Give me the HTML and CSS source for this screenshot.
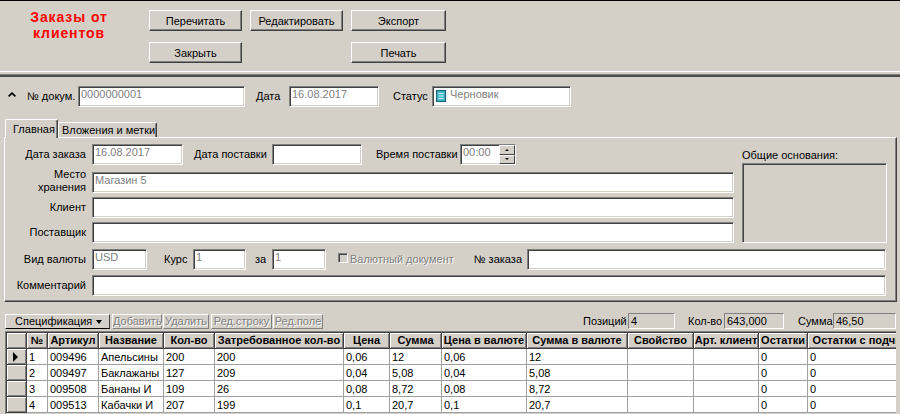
FILE: index.html
```html
<!DOCTYPE html>
<html lang="ru">
<head>
<meta charset="utf-8">
<title>Заказы от клиентов</title>
<link rel="stylesheet" href="styles.css">
</head>
<body>
<div class="top">
  <div class="title"><div>Заказы от</div><div>клиентов</div></div>
  <div class="actions">
    <button class="btn">Перечитать</button>
    <button class="btn">Редактировать</button>
    <button class="btn">Экспорт</button>
    <button class="btn">Закрыть</button>
    <span></span>
    <button class="btn">Печать</button>
  </div>
</div>
<div class="sep"></div>

<div class="docrow">
  <svg class="chev" width="8" height="5" viewBox="0 0 8 5"><path d="M0.6 4.4L4 1.1L7.4 4.4" fill="none" stroke="#000" stroke-width="1.6"/></svg>
  <span class="lbl w-docl">№ докум.</span>
  <div class="field w-doc">0000000001</div>
  <span class="lbl w-datel">Дата</span>
  <div class="field w-date">16.08.2017</div>
  <span class="lbl w-statl">Статус</span>
  <div class="field w-stat">
    <svg class="sticon" width="10" height="12" viewBox="0 0 10 12"><rect x="0.5" y="0.5" width="9" height="11" fill="#3bb4c6" stroke="#1c5f6c"/><path d="M2.5 3.5h5M2.5 6h5M2.5 8.5h5" stroke="#dff6fa" stroke-width="1"/></svg>
    <span class="sttext">Черновик</span>
  </div>
</div>

<div class="tabs">
  <div class="tab active">Главная</div>
  <div class="tab">Вложения и метки</div>
</div>
<div class="panel">
  <div class="upper">
    <div class="form">
      <div class="row">
        <span class="lbl lcol">Дата заказа</span>
        <div class="field w91">16.08.2017</div>
        <span class="lbl w-dpl">Дата поставки</span>
        <div class="field w90"></div>
        <span class="lbl w-tpl">Время поставки</span>
        <div class="field w56 spinfield">
          <span>00:00</span>
          <div class="spin"><div class="sb"><i class="tri-up"></i></div><div class="sb"><i class="tri-dn"></i></div></div>
        </div>
      </div>
      <div class="row r2">
        <span class="lbl lcol two">Место<br>хранения</span>
        <div class="field grow">Магазин 5</div>
      </div>
      <div class="row r3">
        <span class="lbl lcol">Клиент</span>
        <div class="field grow"></div>
      </div>
      <div class="row r3">
        <span class="lbl lcol">Поставщик</span>
        <div class="field grow"></div>
      </div>
    </div>
    <div class="basis">
      <div class="basis-lbl">Общие основания:</div>
      <div class="basis-box"></div>
    </div>
  </div>
  <div class="row cur">
    <span class="lbl lcol">Вид валюты</span>
    <div class="field w55">USD</div>
    <span class="lbl w-kurs">Курс</span>
    <div class="field w53">1</div>
    <span class="lbl w-za">за</span>
    <div class="field w54">1</div>
    <span class="chk"></span>
    <span class="lbl disabled w-val">Валютный документ</span>
    <span class="lbl w-ord">№ заказа</span>
    <div class="field w359"></div>
  </div>
  <div class="row com">
    <span class="lbl lcol">Комментарий</span>
    <div class="field grow"></div>
  </div>
</div>

<div class="toolbar">
  <div class="tbtn spec">Спецификация<span class="caret"></span></div>
  <div class="tbtn dis w-add">Добавить</div>
  <div class="tbtn dis w-del">Удалить</div>
  <div class="tbtn dis w-rs">Ред.строку</div>
  <div class="tbtn dis w-rp">Ред.поле</div>
  <span class="lbl sm w-pos">Позиций</span>
  <div class="sfield w47">4</div>
  <span class="lbl sm w-qty">Кол-во</span>
  <div class="sfield w60">643,000</div>
  <span class="lbl sm w-sum">Сумма</span>
  <div class="sfield w63">46,50</div>
</div>

<div class="grid">
  <div class="gt">
    <div class="h"></div><div class="h">№</div><div class="h">Артикул</div><div class="h">Название</div><div class="h">Кол-во</div><div class="h">Затребованное кол-во</div><div class="h">Цена</div><div class="h">Сумма</div><div class="h">Цена в валюте</div><div class="h">Сумма в валюте</div><div class="h">Свойство</div><div class="h">Арт. клиент</div><div class="h">Остатки</div><div class="h">Остатки с подчиненными</div>

    <div class="h ind"><i class="cur-tri"></i></div><div class="d">1</div><div class="d">009496</div><div class="d">Апельсины</div><div class="d">200</div><div class="d">200</div><div class="d">0,06</div><div class="d">12</div><div class="d">0,06</div><div class="d">12</div><div class="d"></div><div class="d"></div><div class="d">0</div><div class="d">0</div>

    <div class="h ind"></div><div class="d">2</div><div class="d">009497</div><div class="d">Баклажаны</div><div class="d">127</div><div class="d">209</div><div class="d">0,04</div><div class="d">5,08</div><div class="d">0,04</div><div class="d">5,08</div><div class="d"></div><div class="d"></div><div class="d">0</div><div class="d">0</div>

    <div class="h ind"></div><div class="d">3</div><div class="d">009508</div><div class="d">Бананы И</div><div class="d">109</div><div class="d">26</div><div class="d">0,08</div><div class="d">8,72</div><div class="d">0,08</div><div class="d">8,72</div><div class="d"></div><div class="d"></div><div class="d">0</div><div class="d">0</div>

    <div class="h ind"></div><div class="d">4</div><div class="d">009513</div><div class="d">Кабачки И</div><div class="d">207</div><div class="d">199</div><div class="d">0,1</div><div class="d">20,7</div><div class="d">0,1</div><div class="d">20,7</div><div class="d"></div><div class="d"></div><div class="d">0</div><div class="d">0</div>
  </div>
</div>
</body>
</html>
```

FILE: styles.css
```css
* { box-sizing: border-box; }
html, body { margin: 0; padding: 0; }
body {
  width: 900px;
  height: 414px;
  overflow: hidden;
  background: #d4d0c8;
  font-family: "Liberation Sans", Arial, sans-serif;
  font-size: 11px;
  color: #000;
}

/* ---------- top bar ---------- */
.top {
  height: 71px;
  border-top: 1px solid #000;
  display: flex;
}
.title {
  width: 138px;
  padding-top: 8px;
  text-align: center;
  font-weight: bold;
  font-size: 14px;
  line-height: 16px;
  letter-spacing: 0.9px;
  color: #ff0000;
}
.actions {
  display: grid;
  grid-template-columns: 93px 93px 95px;
  grid-auto-rows: 21px;
  column-gap: 8px;
  row-gap: 11px;
  margin: 9px 0 0 11px;
}
.btn {
  height: 21px;
  padding: 0;
  margin: 0;
  background: #d4d0c8;
  border: 1px solid;
  border-color: #fff #404040 #404040 #fff;
  box-shadow: inset -1px -1px 0 #808080;
  font-family: "Liberation Sans", Arial, sans-serif;
  font-size: 11px;
  color: #000;
}
.sep {
  height: 6px;
  background: linear-gradient(#fff 0 1px, #d4d0c8 1px 3px, #808080 3px 4px, #4a4a48 4px 6px);
}

/* ---------- common ---------- */
.lbl {
  flex: none;
  line-height: 21px;
  white-space: nowrap;
}
.field {
  flex: none;
  height: 21px;
  background: #fff;
  border: 1px solid;
  border-color: #808080 #fff #fff #808080;
  box-shadow: inset 1px 1px 0 #404040, inset -1px -1px 0 #d4d0c8;
  padding: 1px 0 0 2px;
  line-height: 13px;
  color: #808080;
  white-space: nowrap;
  overflow: hidden;
}
.grow { flex: 1; }

/* ---------- document row ---------- */
.docrow {
  display: flex;
  align-items: center;
  height: 21px;
  margin-top: 9px;
}
.chev { flex: none; margin-left: 8px; align-self: flex-start; margin-top: 6px; }
.w-docl { margin-left: 11px; width: 51px; }
.w-doc { width: 167px; }
.w-datel { margin-left: 11px; width: 33px; }
.w-date { width: 90px; }
.w-statl { margin-left: 14px; width: 39px; }
.w-stat { width: 139px; display: flex; align-items: flex-start; }
.sticon { flex: none; margin: 2px 0 0 1px; }
.sttext { margin-left: 4px; }

/* ---------- tabs ---------- */
.tabs {
  display: flex;
  align-items: flex-end;
  height: 18px;
  margin-top: 12px;
  padding-left: 5px;
}
.tab {
  background: #d4d0c8;
  border-top: 1px solid #fff;
  border-left: 1px solid #fff;
  border-right: 1px solid #404040;
  box-shadow: inset -1px 0 0 #808080;
  border-radius: 2px 2px 0 0;
  white-space: nowrap;
  line-height: 13px;
}
.tab.active {
  position: relative;
  z-index: 1;
  width: 53px;
  height: 19px;
  margin-bottom: -1px;
  padding: 3px 0 0 7px;
}
.tab:not(.active) {
  width: 99px;
  height: 15px;
  padding: 1px 0 0 3px;
}

/* ---------- panel ---------- */
.panel {
  margin-left: 4px;
  width: 893px;
  height: 165px;
  border: 1px solid;
  border-color: #fff #404040 #404040 #fff;
  box-shadow: inset -1px -1px 0 #808080;
  padding-top: 6px;
}
.upper { display: flex; }
.form { width: 729px; }
.row {
  display: flex;
  align-items: center;
  height: 21px;
}
.r2 { margin-top: 7px; }
.r3 { margin-top: 4px; }
.lcol { width: 81px; margin-right: 6px; text-align: right; }
.lcol.two { line-height: 13px; align-self: flex-start; margin-top: -4px; }
.w91 { width: 91px; }
.w90 { width: 90px; }
.w-dpl { margin-left: 11px; width: 78px; }
.w-tpl { margin-left: 14px; width: 84px; }
.w56 { width: 56px; }
.spinfield { display: flex; justify-content: space-between; padding-right: 0; padding-top: 0; }
.spinfield span { padding-top: 1px; }
.spin { display: flex; flex-direction: column; width: 16px; height: 19px; }
.sb {
  flex: 1;
  background: #d4d0c8;
  border: 1px solid;
  border-color: #fff #404040 #404040 #fff;
  display: flex;
  align-items: center;
  justify-content: center;
}
.tri-up, .tri-dn {
  width: 0; height: 0;
  border-left: 2px solid transparent;
  border-right: 2px solid transparent;
}
.tri-up { border-bottom: 2px solid #000; }
.tri-dn { border-top: 2px solid #000; }

.basis { margin-left: 8px; width: 145px; }
.basis-lbl { height: 19px; line-height: 13px; padding-top: 5px; white-space: nowrap; }
.basis-box {
  height: 80px;
  background: #d4d0c8;
  border: 1px solid;
  border-color: #808080 #fff #fff #808080;
  box-shadow: inset 1px 1px 0 #404040, inset -1px -1px 0 #d4d0c8;
}

.cur { margin-top: 6px; padding-right: 10px; }
.com { margin-top: 5px; padding-right: 10px; }
.w55 { width: 55px; }
.w53 { width: 53px; }
.w54 { width: 54px; }
.w359 { width: 359px; }
.w-kurs { margin-left: 17px; width: 29px; }
.w-za { margin-left: 9px; width: 17px; }
.chk {
  flex: none;
  width: 10px;
  height: 10px;
  margin-left: 12px;
  margin-top: -3px;
  background: #d4d0c8;
  border: 1px solid;
  border-color: #808080 #fff #fff #808080;
  box-shadow: inset 1px 1px 0 #404040;
}
.disabled { color: #808080; text-shadow: 1px 1px 0 #fff; }
.w-val { margin-left: 2px; }
.w-ord { margin-left: auto; margin-right: 5px; }

/* ---------- toolbar ---------- */
.toolbar {
  display: flex;
  align-items: flex-end;
  height: 16px;
  margin-top: 11px;
  padding: 0 4px 0 5px;
}
.tbtn {
  flex: none;
  height: 15px;
  line-height: 13px;
  background: #d4d0c8;
  border: 1px solid;
  white-space: nowrap;
}
.spec {
  width: 105px;
  display: flex;
  align-items: center;
  padding-left: 9px;
  border-color: #fff #404040 #000 #fff;
}
.caret {
  margin-left: auto;
  margin-right: 7px;
  width: 0; height: 0;
  border-left: 3px solid transparent;
  border-right: 3px solid transparent;
  border-top: 4px solid #000;
}
.dis {
  border-color: #fff #808080 #808080 #fff;
  color: #808080;
  text-shadow: 1px 1px 0 #fff;
  text-align: center;
}
.w-add { margin-left: 2px; width: 50px; }
.w-del { margin-left: 1px; width: 46px; }
.w-rs { margin-left: 2px; width: 61px; }
.w-rp { margin-left: 1px; width: 50px; }
.lbl.sm { line-height: 16px; align-self: stretch; }
.w-pos { margin-left: auto; width: 45px; }
.w-qty { margin-left: 13px; width: 36px; }
.w-sum { margin-left: 14px; width: 35px; }
.sfield {
  flex: none;
  height: 16px;
  align-self: stretch;
  background: #d4d0c8;
  border: 1px solid;
  border-color: #808080 #fff #fff #808080;
  padding-left: 2px;
  line-height: 14px;
  color: #000;
  white-space: nowrap;
}
.w47 { width: 47px; }
.w60 { width: 60px; }
.w63 { width: 63px; }

/* ---------- grid ---------- */
.grid {
  margin: 2px 0 0 5px;
  width: 891px;
  height: 83px;
  overflow: hidden;
  border-top: 1px solid #808080;
  border-left: 1px solid #808080;
}
.gt {
  border-top: 1px solid #404040;
  border-left: 1px solid #404040;
  display: grid;
  grid-template-columns: 20px 21px 51px 65px 51px 129px 46px 52px 85px 101px 66px 65px 49px 150px;
  grid-auto-rows: 16px;
  width: max-content;
}
.h {
  background: #d4d0c8;
  border-right: 1px solid #404040;
  border-bottom: 1px solid #404040;
  box-shadow: inset 1px 1px 0 #fff, inset -1px -1px 0 #808080;
  font-weight: bold;
  text-align: center;
  line-height: 14px;
  white-space: nowrap;
  overflow: hidden;
}
.ind { display: flex; align-items: center; }
.cur-tri {
  margin-left: 6px;
  width: 0; height: 0;
  border-top: 5px solid transparent;
  border-bottom: 5px solid transparent;
  border-left: 5px solid #000;
}
.d {
  background: #fff;
  border-right: 1px solid #a0a0a0;
  border-bottom: 1px solid #a0a0a0;
  padding: 1px 0 0 2px;
  line-height: 14px;
  white-space: nowrap;
  overflow: hidden;
}
```
